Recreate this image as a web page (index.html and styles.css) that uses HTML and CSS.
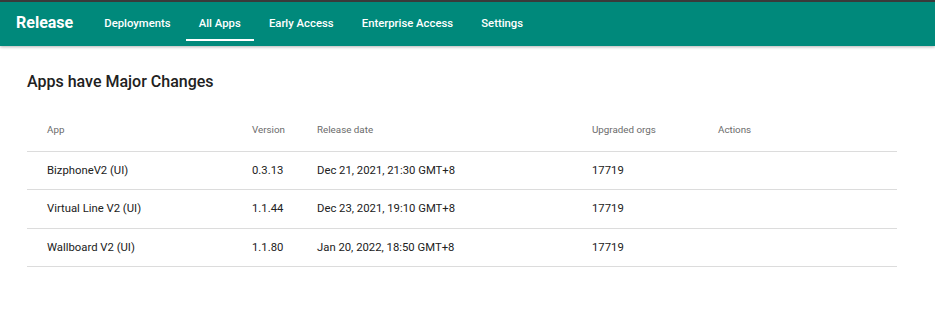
FILE: index.html
```html
<!DOCTYPE html>
<html lang="en">
<head>
    <meta charset="UTF-8">
    <meta name="viewport" content="width=device-width, initial-scale=1.0">
    <title>Release - All Apps</title>
    <link rel="stylesheet" href="styles.css">
</head>
<body>

<header class="topbar">
    <div class="brand">Release</div>
    <nav class="tabs">
        <a class="tab" href="#">Deployments</a>
        <a class="tab active" href="#">All Apps</a>
        <a class="tab" href="#">Early Access</a>
        <a class="tab" href="#">Enterprise Access</a>
        <a class="tab" href="#">Settings</a>
    </nav>
</header>

<main class="content">
    <h2 class="section-title">Apps have Major Changes</h2>

    <table class="apps-table">
        <colgroup>
            <col style="width: 205px">
            <col style="width: 65px">
            <col style="width: 275px">
            <col style="width: 126px">
            <col>
        </colgroup>
        <thead>
            <tr>
                <th>App</th>
                <th>Version</th>
                <th>Release date</th>
                <th>Upgraded orgs</th>
                <th>Actions</th>
            </tr>
        </thead>
        <tbody>
            <tr>
                <td>BizphoneV2 (UI)</td>
                <td>0.3.13</td>
                <td>Dec 21, 2021, 21:30 GMT+8</td>
                <td>17719</td>
                <td></td>
            </tr>
            <tr>
                <td>Virtual Line V2 (UI)</td>
                <td>1.1.44</td>
                <td>Dec 23, 2021, 19:10 GMT+8</td>
                <td>17719</td>
                <td></td>
            </tr>
            <tr>
                <td>Wallboard V2 (UI)</td>
                <td>1.1.80</td>
                <td>Jan 20, 2022, 18:50 GMT+8</td>
                <td>17719</td>
                <td></td>
            </tr>
        </tbody>
    </table>
</main>

</body>
</html>
```

FILE: styles.css
```css
/* Basic Reset */
* {
    margin: 0;
    padding: 0;
    box-sizing: border-box;
}

body {
    font-family: Roboto, "Liberation Sans", Arial, sans-serif;
    background-color: #ffffff;
    color: #212121;
}

/* Top bar */
.topbar {
    display: flex;
    align-items: center;
    height: 46px;
    background-color: #00897b;
    border-top: 2px solid #3a3a3a;
    box-shadow: 0 1px 3px rgba(0, 0, 0, 0.3);
    padding-left: 16px;
}

.brand {
    color: #ffffff;
    font-size: 16px;
    font-weight: 700;
    margin-right: 17px;
    margin-top: -3px;
}

.tabs {
    display: flex;
    align-self: stretch;
}

.tab {
    display: flex;
    align-items: center;
    padding: 5px 13px 0 13px;
    margin: 0 1.1px 5px 1.1px;
    color: #ffffff;
    font-size: 11.3px;
    font-weight: 500;
    text-decoration: none;
    border-bottom: 2px solid transparent;
}

.tab.active {
    border-bottom-color: #ffffff;
}

/* Page content */
.content {
    padding: 26px 38px 0 27px;
}

.section-title {
    font-size: 16px;
    font-weight: 500;
    line-height: 20px;
    color: #212121;
    margin-bottom: 16px;
}

.apps-table {
    width: 100%;
    border-collapse: collapse;
    table-layout: fixed;
}

.apps-table th,
.apps-table td {
    text-align: left;
    padding: 0 0 0 20px;
    white-space: nowrap;
}

.apps-table th {
    height: 43px;
    font-size: 9.8px;
    font-weight: 400;
    color: #6b6b6b;
    border-bottom: 1px solid #dcdcdc;
}

.apps-table td {
    height: 38.6px;
    font-size: 11.3px;
    color: #212121;
    border-bottom: 1px solid #dcdcdc;
}
```
